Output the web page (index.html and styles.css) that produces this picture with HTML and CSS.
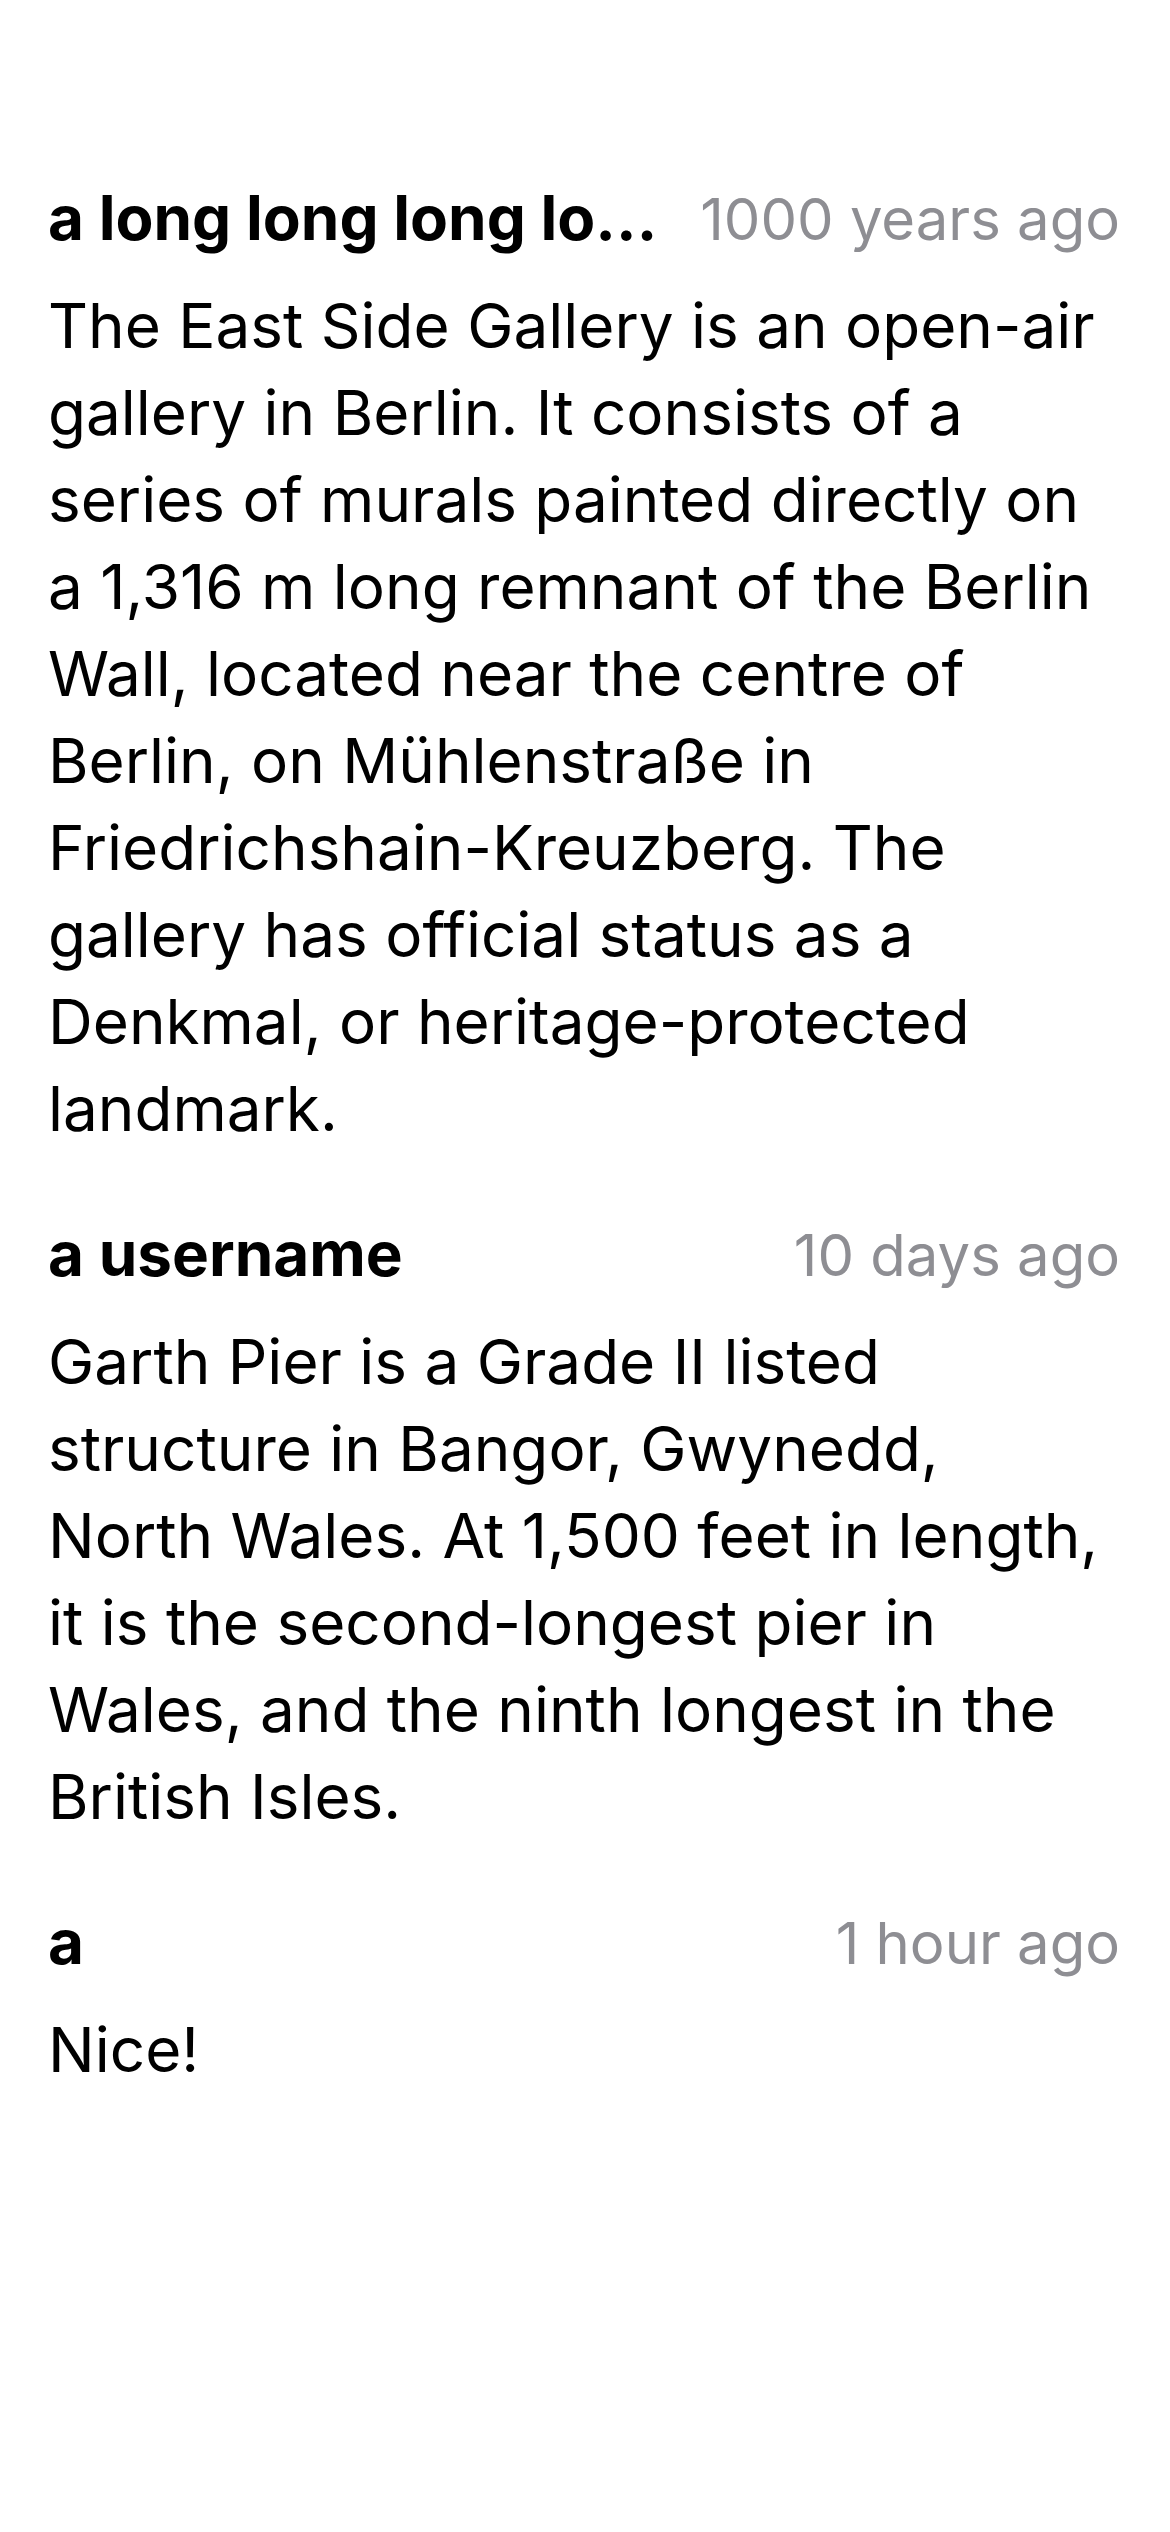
FILE: index.html
```html
<!DOCTYPE html>
<html lang="en">
<head>
<meta charset="utf-8">
<title>Comments</title>
<link rel="stylesheet" href="styles.css">
</head>
<body>
<main class="comments">
  <article class="comment">
    <header class="comment-header">
      <span class="name">a long long long long long long long username</span>
      <span class="time">1000 years ago</span>
    </header>
    <p class="text">The East Side Gallery is an open-air gallery in Berlin. It consists of a series of murals painted directly on a 1,316 m long remnant of the Berlin Wall, located near the centre of Berlin, on Mühlenstraße in Friedrichshain-Kreuzberg. The gallery has official status as a Denkmal, or heritage-protected landmark.</p>
  </article>
  <article class="comment">
    <header class="comment-header">
      <span class="name">a username</span>
      <span class="time">10 days ago</span>
    </header>
    <p class="text">Garth Pier is a Grade II listed structure in Bangor, Gwynedd, North Wales. At 1,500 feet in length, it is the second-longest pier in Wales, and the ninth longest in the British Isles.</p>
  </article>
  <article class="comment">
    <header class="comment-header">
      <span class="name">a</span>
      <span class="time">1 hour ago</span>
    </header>
    <p class="text">Nice!</p>
  </article>
</main>
</body>
</html>
```
FILE: styles.css
```css
html, body {
  margin: 0;
  padding: 0;
  background: #ffffff;
}
body {
  font-family: Inter, "Noto Sans", sans-serif;
  color: #000000;
  -webkit-font-smoothing: antialiased;
}
.comments {
  display: flex;
  flex-direction: column;
  gap: 64px;
  padding: 180px 50px 0 48px;
}
.comment {
  display: flex;
  flex-direction: column;
  gap: 25px;
}
.comment-header {
  display: flex;
  align-items: baseline;
  gap: 40px;
  line-height: 76px;
}
.name {
  flex: 1 1 auto;
  min-width: 0;
  font-size: 62px;
  font-weight: 700;
  white-space: nowrap;
  overflow: hidden;
  text-overflow: ellipsis;
}
.time {
  flex: 0 0 auto;
  font-size: 58px;
  color: #8e8e93;
  white-space: nowrap;
}
.text {
  margin: 0;
  font-size: 62px;
  line-height: 87px;
}
```
